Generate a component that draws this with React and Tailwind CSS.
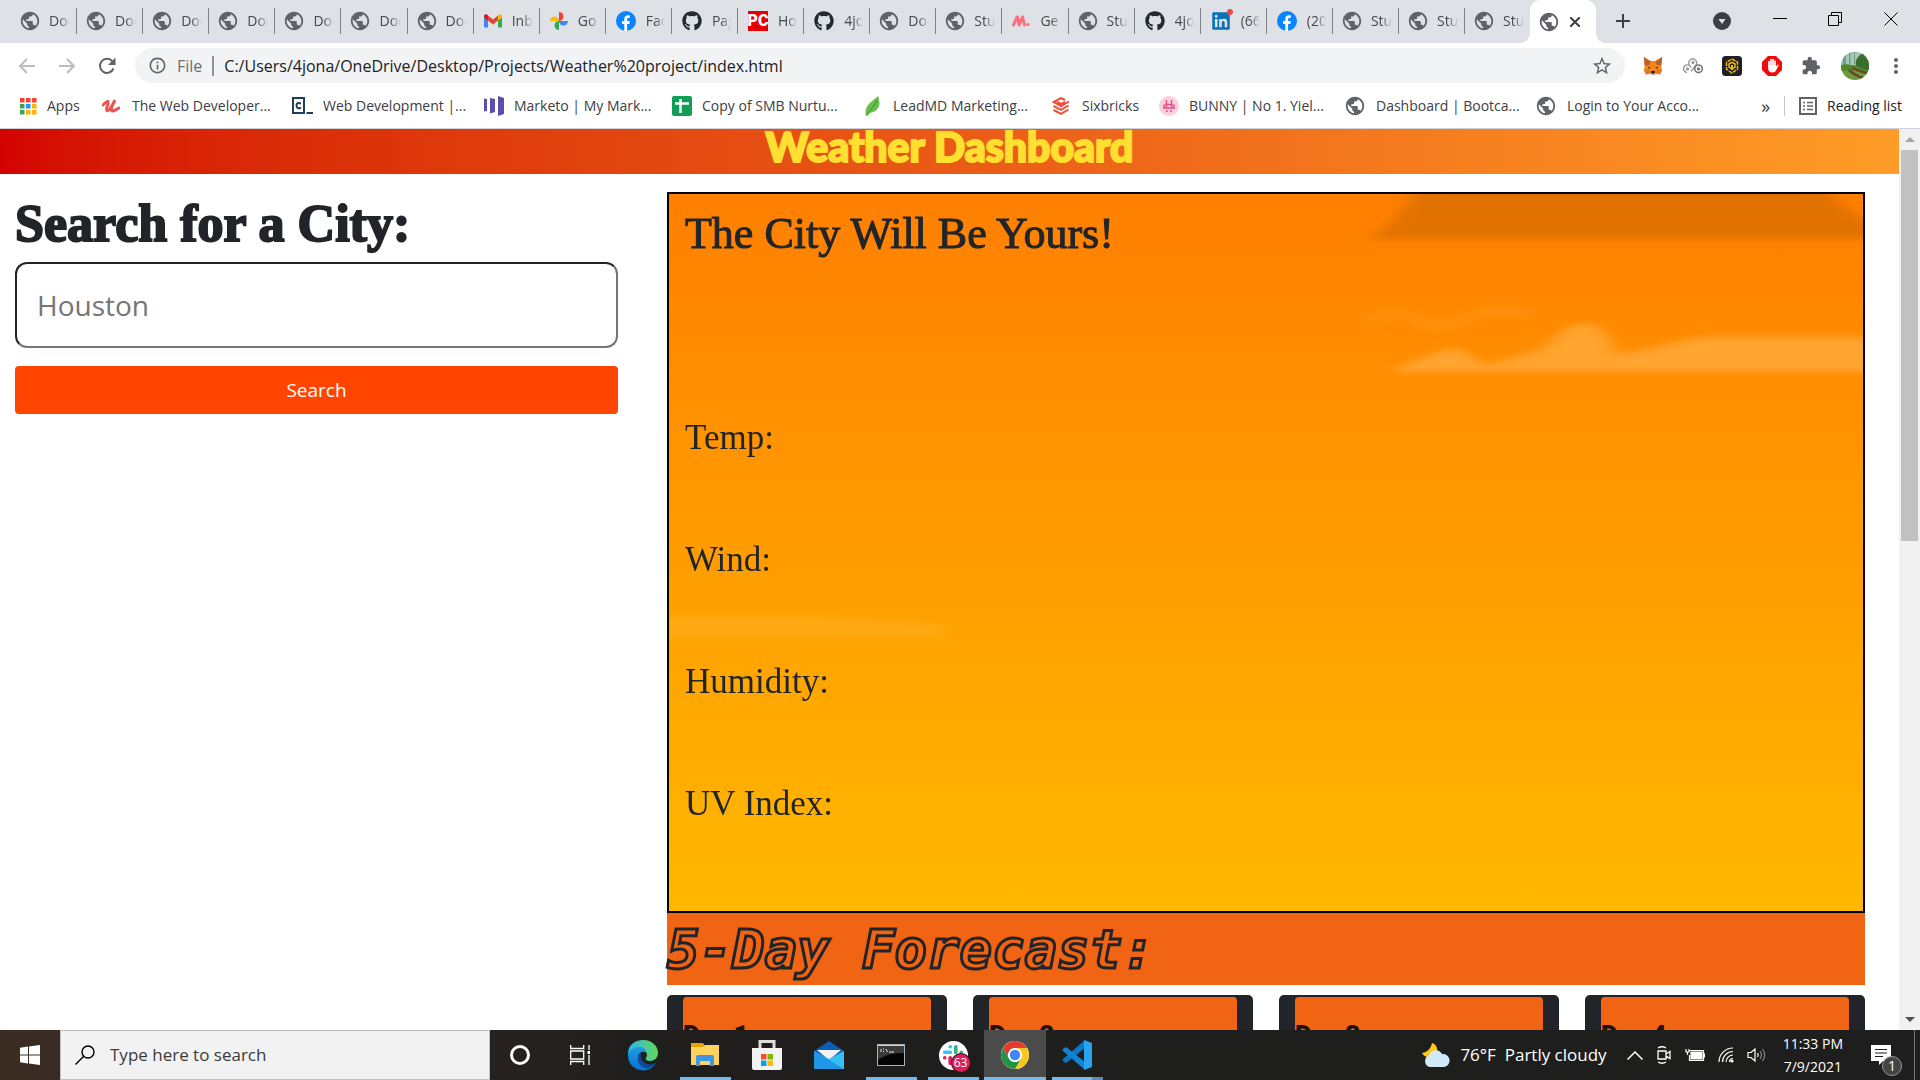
import React from "react";
import { FaGithub, FaLinkedin } from "react-icons/fa";
import { MdPublic, MdExtension, MdOutlineStarBorder, MdMoreVert, MdInfoOutline } from "react-icons/md";

function Globe() {
  return <MdPublic className="-mx-0.5 size-[22px] shrink-0 text-[#5f6368]" />;
}

function Gmail() {
  return (
    <svg viewBox="0 0 18 18" className="size-[18px] shrink-0">
      <path d="M0 4v10.500c0 .6.500 1 1 1h3V7z" fill="#4285f4" />
      <path d="M14 7v8.500h3c.6 0 1-.4 1-1V4z" fill="#34a853" />
      <path d="M4 3.500v5l5 4 5-4v-5L9 7.500z" fill="#ea4335" />
      <path d="M0 4.200C0 2.500 2 1.800 3.200 2.800L4 3.500v5l-4-3z" fill="#c5221f" />
      <path d="M18 4.200c0-1.700-2-2.400-3.200-1.400l-.8.700v5l4-3z" fill="#fbbc04" />
    </svg>
  );
}

function Photos() {
  return (
    <svg viewBox="0 0 18 18" className="size-[18px] shrink-0">
      <path d="M9 0a4.500 4.500 0 0 1 0 9z" fill="#ea4335" />
      <path d="M18 9a4.500 4.500 0 0 1-9 0z" fill="#4285f4" />
      <path d="M9 18a4.500 4.500 0 0 1 0-9z" fill="#34a853" />
      <path d="M0 9a4.500 4.500 0 0 1 9 0z" fill="#fbbc04" />
    </svg>
  );
}

function Facebook() {
  return (
    <svg viewBox="0 0 20 20" className="size-5 shrink-0">
      <circle cx="10" cy="10" r="10" fill="#0a84ff" />
      <path d="M8.300 20v-7H6v-3h2.300V8c0-2.600 1.400-3.800 3.600-3.800.9 0 1.700.1 1.900.2v2.500h-1.400c-1.100 0-1.300.6-1.300 1.400V10h2.600l-.4 3h-2.200v7z" fill="#fff" />
    </svg>
  );
}

function PcMag() {
  return (
    <span className="flex size-5 shrink-0 items-center justify-center bg-[#e80000] font-['Roboto'] text-base leading-5 font-black text-white">
      PC
    </span>
  );
}

function Github() {
  return <FaGithub className="size-5 shrink-0 text-[#24292e]" />;
}

function MonMark() {
  return (
    <svg viewBox="0 0 18 18" className="size-[18px] shrink-0">
      <path d="M1.500 13 5 5M7 13l3.500-8M7 13 5.500 5M12.500 13l-2-8" stroke="#ff6d78" strokeWidth="3" strokeLinecap="round" />
      <circle cx="16" cy="12.500" r="1.600" fill="#ff6d78" />
    </svg>
  );
}

function Linkedin() {
  return (
    <span className="relative size-5 shrink-0">
      <FaLinkedin className="size-5 text-[#0a72b5]" />
      <span className="absolute -top-0.5 -right-0.5 size-1.5 rounded-full bg-[#f0483e]" />
    </span>
  );
}

const tabs = [
  [Globe, "Doc"], [Globe, "Doc"], [Globe, "Doc"], [Globe, "Doc"], [Globe, "Doc"], [Globe, "Doc"], [Globe, "Doc"],
  [Gmail, "Inb"], [Photos, "Go"], [Facebook, "Fac"], [Github, "Pag"], [PcMag, "Ho"], [Github, "4jo"],
  [Globe, "Doc"], [Globe, "Stu"], [MonMark, "Ge"], [Globe, "Stu"], [Github, "4jo"], [Linkedin, "(66"],
  [Facebook, "(20"], [Globe, "Stu"], [Globe, "Stu"], [Globe, "Stu"],
];

function TabStrip() {
  return (
    <div className="flex h-[43px] shrink-0 bg-[#dee1e6]">
      <div className="flex min-w-0 flex-1 items-center pb-0.5 pl-[11px]">
        {tabs.map(([Icon, label], i) => (
          <button
            key={i}
            className={`flex h-[26px] min-w-0 flex-1 items-center gap-2.5 pl-2.5 ${i < 22 ? "border-r border-[#808387]" : ""}`}
          >
            <Icon />
            <span className="mr-1.5 min-w-0 flex-1 overflow-hidden text-left text-sm whitespace-nowrap text-[#45494d] [mask-image:linear-gradient(to_right,black_50%,transparent)]">
              {label}
            </span>
          </button>
        ))}
      </div>
      <div className="relative flex h-full w-[66px] items-center justify-center gap-3 rounded-t-[10px] bg-white pr-1.5">
        <span className="absolute bottom-0 -left-2.5 size-2.5 bg-[radial-gradient(circle_at_0_0,#dee1e6_10px,white_10px)]" />
        <span className="absolute -right-2.5 bottom-0 size-2.5 bg-[radial-gradient(circle_at_100%_0,#dee1e6_10px,white_10px)]" />
        <Globe />
        <button aria-label="Close tab">
          <svg viewBox="0 0 10 10" className="size-2.5 stroke-[#3c4043] stroke-2">
            <path d="m0 0 10 10M10 0 0 10" />
          </svg>
        </button>
      </div>
      <div className="flex w-[324px] items-center justify-between pr-[22px] pb-0.5 pl-5">
        <button aria-label="New tab">
          <svg viewBox="0 0 14 14" className="size-3.5 stroke-[#3c4043] stroke-2">
            <path d="M7 0v14M0 7h14" />
          </svg>
        </button>
        <div className="flex w-[185px] items-center justify-between">
          <button aria-label="Search tabs">
            <svg viewBox="0 0 18 18" className="size-[18px]">
              <circle cx="9" cy="9" r="9" fill="#3c4043" />
              <path d="M5.500 7h7L9 12z" fill="#dee1e6" />
            </svg>
          </button>
          <button aria-label="Minimize" className="mb-1">
            <svg viewBox="0 0 14 14" className="size-3.5 stroke-black" fill="none">
              <path d="M0 6.500h14" />
            </svg>
          </button>
          <button aria-label="Restore" className="mb-1">
            <svg viewBox="0 0 14 14" className="size-3.5 stroke-black" fill="none">
              <path d="M.5 3.500h10v10H.5zM3.500 3V.5h10v10H11" />
            </svg>
          </button>
          <button aria-label="Close window" className="mb-1">
            <svg viewBox="0 0 14 14" className="size-3.5 stroke-black" fill="none">
              <path d="m.5.5 13 13M13.500.5l-13 13" />
            </svg>
          </button>
        </div>
      </div>
    </div>
  );
}

function MetaMask() {
  return (
    <svg viewBox="0 0 20 20" className="size-5">
      <path d="M.8 1 8 5h4l7.200-4-.9 9 .7 4-2 4.500-4-1L11.500 19h-3L7 17.500l-4 1L1 14l.7-4z" fill="#f6851b" />
      <path d="M.8 1 8 6 6 9 1.700 9.500zM19.200 1 12 6l2 3 4.300.5z" fill="#b8612b" />
      <path d="m1 14 5-1 1 4.500-4 1zM19 14l-5-1-1 4.500 4 1z" fill="#e27625" />
      <path d="m5 10.500 3 1.500-2.500.500zM15 10.500 12 12l2.500.500z" fill="#233447" />
      <path d="m8 16 .5-1h3l.5 1-.5 1.500h-3z" fill="#161616" />
      <path d="M7.500 17.500h5l-1 1.500h-3z" fill="#c0ad9e" />
    </svg>
  );
}

function Rings() {
  return (
    <svg viewBox="0 0 20 20" className="size-5" fill="none" stroke="#999" strokeWidth="1.300">
      <path d="M4 16.500A3.800 3.800 0 1 1 8 11.500" />
      <path d="M6.500 9A3.900 3.900 0 1 1 13 9l-2 2.500-3 4" />
      <circle cx="15.500" cy="12.800" r="3.800" stroke="#777" strokeWidth="1.600" />
      <circle cx="15.500" cy="12.800" r="1" stroke="#666" />
      <circle cx="10" cy="6.500" r="1" />
      <circle cx="4.500" cy="13" r="1" />
    </svg>
  );
}

function Bsc() {
  return (
    <svg viewBox="0 0 20 20" className="size-5">
      <rect width="20" height="20" rx="3.500" fill="#1e2026" />
      <g fill="none" stroke="#f0b90b" strokeWidth="1.500">
        <path d="m10 3 5.500 3.200v7L10 17l-5.500-3.800v-7z" strokeDasharray="4 1" />
        <path d="m7 8 3-1.700L13 8v3l-3 2-3-2z" />
      </g>
      <path d="M9 9h2v5H9z" fill="#f0b90b" />
    </svg>
  );
}

function AdBlock() {
  return (
    <svg viewBox="0 0 20 20" className="size-5">
      <path d="M6 0h8l6 6v8l-6 6H6l-6-6V6z" fill="#ed0b0b" />
      <path d="M7 10V5.500M9 9V3.500M11 9V3.500M13 9.500V5" stroke="#fff" strokeWidth="1.700" strokeLinecap="round" />
      <path d="M6.200 9h7.700v1.500l1.600-1.800c.8-.5 1.300.2 1 .8L14 14.500c-.6 1.300-1.500 2-3.500 2-2.800 0-4.300-1.500-4.300-4z" fill="#fff" />
    </svg>
  );
}

function Avatar() {
  return (
    <svg viewBox="0 0 28 28" className="size-7 rounded-full">
      <rect width="28" height="28" fill="#6d9a3c" />
      <rect width="28" height="13" fill="#a9c9b8" />
      <path d="M2 0h3v13H2zM8 0h1.500v12H8zM13 0h1v12h-1z" fill="#6f9a85" />
      <path d="M18 4c4-4 8-3 10 0v15l-13-5c-1-4 0-7 3-10z" fill="#3b6e2a" />
      <path d="M0 13c7-2 12 0 16 2l12 4v3l-12-4L0 19z" fill="#4d8a2c" />
      <path d="M11 16c5 2 9 4 15 5M8 18c4 4 8 6 14 8" stroke="#6b4a2c" strokeWidth="2.500" fill="none" />
    </svg>
  );
}

function AddressBar() {
  return (
    <div className="flex h-[45px] shrink-0 items-center bg-white pr-4 pl-[18px]">
      <div className="flex w-[117px] items-center gap-[22px]">
        <button aria-label="Back">
          <svg viewBox="0 0 18 18" className="size-[18px] stroke-[#babcbe] stroke-2" fill="none">
            <path d="M17 9H2M9 2 2 9l7 7" />
          </svg>
        </button>
        <button aria-label="Forward">
          <svg viewBox="0 0 18 18" className="size-[18px] stroke-[#babcbe] stroke-2" fill="none">
            <path d="M1 9h15M9 2l7 7-7 7" />
          </svg>
        </button>
        <button aria-label="Reload">
          <svg viewBox="0 0 18 18" className="size-[18px]" fill="none">
            <path d="M15.500 11.500A7 7 0 1 1 14.500 4.500L16 6" stroke="#5f6368" strokeWidth="2" />
            <path d="M17.500.5V8H10z" fill="#5f6368" />
          </svg>
        </button>
      </div>
      <div className="flex h-[35px] min-w-0 flex-1 items-center rounded-full bg-[#f1f3f4] pr-3 pl-[13px]">
        <MdInfoOutline className="size-[19px] text-[#5f6368]" />
        <span className="ml-2.5 text-base text-[#6b6f73]">File</span>
        <span className="mx-2.5 h-5 w-0.5 bg-[#909396]" />
        <input
          aria-label="Address"
          className="min-w-0 flex-1 bg-transparent text-base text-[#202124] outline-none"
          defaultValue="C:/Users/4jona/OneDrive/Desktop/Projects/Weather%20project/index.html"
        />
        <button aria-label="Bookmark this page">
          <MdOutlineStarBorder className="size-[22px] text-[#5f6368]" />
        </button>
      </div>
      <div className="ml-[18px] flex w-[261px] items-center justify-between">
        <button aria-label="MetaMask"><MetaMask /></button>
        <button aria-label="Rings"><Rings /></button>
        <button aria-label="Wallet"><Bsc /></button>
        <button aria-label="AdBlock"><AdBlock /></button>
        <button aria-label="Extensions"><MdExtension className="size-5 text-[#5f6368]" /></button>
        <button aria-label="Profile"><Avatar /></button>
        <button aria-label="Menu" className="-mx-1"><MdMoreVert className="size-6 text-[#5f6368]" /></button>
      </div>
    </div>
  );
}

function Apps() {
  const colors = ["#f44336", "#f44336", "#f44336", "#34a853", "#2196f3", "#fbb105", "#34a853", "#fbb105", "#fbb105"];
  return (
    <svg viewBox="0 0 17 17" className="size-[17px]">
      {colors.map((c, i) => (
        <rect key={i} x={(i % 3) * 6} y={Math.floor(i / 3) * 6} width="4.500" height="4.500" fill={c} />
      ))}
    </svg>
  );
}

function Udemy() {
  return (
    <svg viewBox="0 0 18 18" className="size-[18px]" fill="none" stroke="#eb5252" strokeWidth="3">
      <path d="M1 8c2-2 4-4 5-3.500C7.500 6 3 12 5 13.500c2.500 1.500 6-7 8-10.500-2 4-5 10-3 11 1.500.5 4-1.500 7-3" strokeLinecap="round" />
    </svg>
  );
}

function Codecademy() {
  return (
    <svg viewBox="0 0 21 18" className="h-[18px] w-[21px]" fill="none" stroke="#204056" strokeWidth="2">
      <path d="M1 1h11v15H1zM14.500 16H21" />
      <path d="M9 6.500C6 5 4.500 6.500 4.500 8.500S6 12 9 10.800" />
    </svg>
  );
}

function Marketo() {
  return (
    <svg viewBox="0 0 20 20" className="size-5" fill="#5c4db1">
      <path d="M0 2.500 3 3v12l-3 .5zM6 2l5 1v13l-5 1.500zM14 0l6 2v16l-6 2z" />
    </svg>
  );
}

function Sheet() {
  return (
    <svg viewBox="0 0 20 20" className="size-5">
      <rect width="20" height="20" rx="2" fill="#0f9d58" />
      <path d="M8.500 3v14M3 7.500h14" stroke="#fff" strokeWidth="2.500" />
    </svg>
  );
}

function Leaf() {
  return (
    <svg viewBox="0 0 16 20" className="h-5 w-4">
      <path d="M13 0c3 8 2 15-8 17l-2.500 3H1C-1 10 5 7 13 0z" fill="#6abf4b" />
      <path d="M12 4C10 10 6 13 2 18" stroke="#3c8a30" fill="none" />
    </svg>
  );
}

function Sixbricks() {
  return (
    <svg viewBox="0 0 18 18" className="size-[18px]" fill="none" stroke="#f04e36" strokeWidth="2">
      <path d="M17 4.500 9 9 1.500 5 9 1l4 2M16.500 8.500 9 12.800 1.500 9M16.500 12.500 9 16.800 1.500 13M5 5l4 2 4-2" />
    </svg>
  );
}

function Bunny() {
  return (
    <svg viewBox="0 0 20 20" className="size-5">
      <circle cx="10" cy="10" r="10" fill="#fbd0da" />
      <path d="M7.500 4v8M12.500 4v8M5 12V9.500c0-1.500 10-1.500 10 0V12M4 12h12" stroke="#e0508a" strokeWidth="1.500" fill="none" />
      <circle cx="8" cy="15" r="1" fill="#e0508a" />
      <circle cx="12" cy="15" r="1" fill="#e0508a" />
    </svg>
  );
}

const bookmarks = [
  [Apps, "Apps", "w-[82px]", "gap-2.5"],
  [Udemy, "The Web Developer...", "w-[190px]", "gap-3"],
  [Codecademy, "Web Development |...", "w-[192px]", "gap-2.5"],
  [Marketo, "Marketo | My Mark...", "w-[188px]", "gap-2.5"],
  [Sheet, "Copy of SMB Nurtu...", "w-[193px]", "gap-2.5"],
  [Leaf, "LeadMD Marketing...", "w-[187px]", "gap-3"],
  [Sixbricks, "Sixbricks", "w-[107px]", "gap-3"],
  [Bunny, "BUNNY | No 1. Yiel...", "w-[187px]", "gap-2.5"],
  [Globe, "Dashboard | Bootca...", "w-[191px]", "gap-3"],
  [Globe, "Login to Your Acco...", "w-[190px]", "gap-3"],
];

function BookmarksBar() {
  return (
    <nav className="flex h-[41px] shrink-0 items-center border-b border-[#cfd2d9] bg-white pr-[18px] pb-1 pl-5 text-sm text-[#3c4043]">
      {bookmarks.map(([Icon, label, width, gap]) => (
        <a key={label} href="#" className={`flex items-center whitespace-nowrap ${width} ${gap}`}>
          <Icon />
          {label}
        </a>
      ))}
      <button className="ml-auto text-lg leading-5" aria-label="More bookmarks">»</button>
      <button className="ml-3.5 flex items-center gap-2.5 border-l border-[#c4c7cb] pl-3.5 text-[#202124]">
        <svg viewBox="0 0 18 18" className="size-[18px]" fill="none" stroke="#5f6368" strokeWidth="2">
          <path d="M1 1h16v16H1z" />
          <path d="M4 5.500h2M8 5.500h6M4 9h2M8 9h6M4 12.500h2M8 12.500h6" strokeWidth="1.500" />
        </svg>
        Reading list
      </button>
    </nav>
  );
}

function Sky() {
  return (
    <svg viewBox="0 0 1194 717" preserveAspectRatio="none" className="absolute inset-0 size-full" aria-hidden="true">
      <defs>
        <filter id="soft" x="-10%" y="-50%" width="120%" height="200%">
          <feGaussianBlur stdDeviation="8 3" />
        </filter>
      </defs>
      <g filter="url(#soft)">
        <path d="M752-10h404q15 25 48 38v17H700q18-12 30-26z" fill="#e27200" />
        <path d="M722 178q24-14 62-24 18 4 30 17 34-8 60-16 22-26 42-26t32 32q50-10 80-18h200v35z" fill="#ffa633" opacity=".9" />
        <path d="M700 130q20-20 45-5t60-4q30-8 60 0" stroke="#ff9a20" strokeWidth="12" fill="none" opacity=".35" />
        <path d="M-10 422h150l135 8v14H-10z" fill="#ffb01f" opacity=".5" />
      </g>
    </svg>
  );
}

function Scrollbar() {
  return (
    <div className="flex w-[21px] shrink-0 flex-col items-center bg-[#f1f1f1]">
      <svg viewBox="0 0 10 5" className="my-2 h-[5px] w-2.5">
        <path d="M5 0l5 5H0z" fill="#a3a3a3" />
      </svg>
      <div className="h-[391px] w-[17px] bg-[#c1c1c1]" />
      <svg viewBox="0 0 10 5" className="mt-auto mb-2 h-[5px] w-2.5">
        <path d="M0 0h10L5 5z" fill="#505050" />
      </svg>
    </div>
  );
}

function Page() {
  return (
    <div className="flex min-h-0 flex-1 bg-white text-[#212529]">
      <div className="min-w-0 flex-1 overflow-hidden">
        <header className="flex h-[45px] justify-center bg-linear-to-r from-[#d30202] via-[#ea5a16] to-[#ff9c26]">
          <h1 className="font-['Lato'] text-[41px] leading-[36px] font-black whitespace-nowrap text-[#ffdf2f] [-webkit-text-stroke:2px_#ffdf2f]">Weather Dashboard</h1>
        </header>
        <div className="flex">
          <form className="w-1/3 px-[15px] pt-[18px]" onSubmit={(e) => e.preventDefault()}>
            <label
              htmlFor="city"
              className="block font-['Liberation_Serif'] text-[52px] leading-[64px] font-bold whitespace-nowrap [-webkit-text-stroke:2px_#212529]"
            >
              Search for a City:
            </label>
            <input
              id="city"
              type="text"
              placeholder="Houston"
              className="mt-1.5 block h-[86px] w-full rounded-xl border-2 border-t-[#212529] border-r-[#767676] border-b-[#767676] border-l-[#212529] px-5 text-[28px] outline-none placeholder:text-[#757575]"
            />
            <button className="mt-[18px] block h-12 w-full rounded bg-[#ff4500] text-[19px] text-white">Search</button>
          </form>
          <main className="w-2/3 px-[34px] pt-[18px]">
            <section className="relative h-[721px] border-2 border-black bg-linear-to-b from-[#ff7f00] to-[#ffb800] px-4 pt-3.5 font-['Liberation_Serif']">
              <Sky />
              <div className="relative">
                <h2 className="text-[44px] leading-[52px] [-webkit-text-stroke:1px_#212529]">The City Will Be Yours!</h2>
                <div className="mt-[153px] flex flex-col gap-[72px] text-[35px] leading-[50px]">
                  <p>Temp:</p>
                  <p>Wind:</p>
                  <p>Humidity:</p>
                  <p>UV Index:</p>
                </div>
              </div>
            </section>
            <h2 className="h-[72px] bg-[#f06414] font-['DejaVu_Sans_Mono'] text-[54px] leading-[74px] font-bold whitespace-nowrap text-transparent italic [-webkit-text-stroke:3px_#212529]">
              5-Day Forecast:
            </h2>
            <div className="mt-2.5 grid grid-cols-4 gap-[26px]">
              {[1, 2, 3, 4].map((n) => (
                <article key={n} className="h-[320px] rounded-[5px] bg-[#212529] px-4 pt-0.5">
                  <div className="h-full rounded bg-[#f06414] pt-[22px]">
                    <h3 className="font-['Roboto'] text-[26px] leading-8 font-black text-[#1d1208]">Day {n}</h3>
                  </div>
                </article>
              ))}
            </div>
          </main>
        </div>
      </div>
      <Scrollbar />
    </div>
  );
}

function Edge() {
  return (
    <svg viewBox="0 0 32 32" className="size-8">
      <defs>
        <linearGradient id="edgeTop" x1="0" x2="1">
          <stop offset="0" stopColor="#2fb6ee" />
          <stop offset="1" stopColor="#5fd85a" />
        </linearGradient>
        <linearGradient id="edgeSide" x1="0" y1="0" x2="0" y2="1">
          <stop offset="0" stopColor="#1c9de5" />
          <stop offset="1" stopColor="#0c6fd0" />
        </linearGradient>
      </defs>
      <path d="M1 15C1 6 8 1 16 1c9 0 15 6 15 13 0 5-4 8-8 8-3 0-5-1-4-3 2-3 1-8-5-8C8 11 3 13 1 18z" fill="url(#edgeTop)" />
      <path d="M1 16c1-5 6-8 11-8 4 0 7 2 7 5-8-2-10 6-6 11 4 5 11 5 16 0-3 5-8 7.500-13 7.500C7 31 1 25 1 16z" fill="url(#edgeSide)" />
      <path d="M12 15c-3 6 0 12 6 14 4 1 8-1 11-5-6 3-13 1-15-5-.4-1.500 0-3 0-4z" fill="#0b4a94" />
    </svg>
  );
}

function Explorer() {
  return (
    <svg viewBox="0 0 28 24" className="h-6 w-7">
      <path d="M0 0h12l2 3v6H0z" fill="#e2a200" />
      <path d="M0 4h12l2-2h14v20H0z" fill="#ffd35e" />
      <path d="M5 23V14q0-2 2-2h14q2 0 2 2v9h-4v-5H9v5z" fill="#3e97e2" />
    </svg>
  );
}

function Store() {
  return (
    <svg viewBox="0 0 30 30" className="size-[30px]">
      <path d="M8 9V1.500h14V9" fill="none" stroke="#ddd" strokeWidth="3" />
      <path d="M0 8h30v20q0 2-2 2H2q-2 0-2-2z" fill="#f3f3f3" />
      <path d="M9 14h5.500v5.500H9z" fill="#f25022" />
      <path d="M15.500 14H21v5.500h-5.500z" fill="#7fba00" />
      <path d="M9 20.500h5.500V26H9z" fill="#00a4ef" />
      <path d="M15.500 20.500H21V26h-5.500z" fill="#ffb900" />
    </svg>
  );
}

function Mail() {
  return (
    <svg viewBox="0 0 30 28" className="h-7 w-[30px]">
      <path d="M0 10 15 0l15 10v8H0z" fill="#0c5eb5" />
      <path d="M3 9h24L15 19z" fill="#f2f2f2" />
      <path d="M0 10l15 8L30 10v18H0z" fill="#38c0f5" />
      <path d="M0 10 30 28H0z" fill="#1f97e6" />
    </svg>
  );
}

function Terminal() {
  return (
    <svg viewBox="0 0 28 22" className="h-[22px] w-7">
      <rect x=".5" y=".5" width="27" height="21" fill="#050505" stroke="#a8b0b8" />
      <path d="M1 1h26v8C18 9 8 10 1 16z" fill="#3a3a3a" />
      <path d="M1 1.500h26" stroke="#cfd6dd" />
      <path d="M4 5v3M6 5h1M6 7.500h1M9 5l1.500 3M12 8h5" stroke="#e6e6e6" />
    </svg>
  );
}

function Slack() {
  return (
    <span className="relative flex size-[29px] items-center justify-center rounded-full bg-white">
      <svg viewBox="0 0 20 20" className="size-[22px]" fill="none" strokeWidth="3.400" strokeLinecap="round">
        <path d="M2.500 7.500h5M7.500 2.500h.01" stroke="#36c5f0" />
        <path d="M12.500 2.500v5M17.500 7.500h.01" stroke="#2eb67d" />
        <path d="M17.500 12.500h-5M12.500 17.500h.01" stroke="#ecb22e" />
        <path d="M7.500 17.500v-5M2.500 12.500h.01" stroke="#e01e5a" />
      </svg>
      <span className="absolute -right-0.5 -bottom-0.5 flex h-[18px] w-[18px] items-center justify-center rounded-full bg-[#e01e5a] text-xs leading-3 text-white ring-1 ring-[#3a1020]">63</span>
    </span>
  );
}

function Chrome() {
  return (
    <svg viewBox="0 0 28 28" className="size-7">
      <circle cx="14" cy="14" r="14" fill="#fff" />
      <path d="M1.900 7A14 14 0 0 1 26.100 7H14a7 7 0 0 0-6.100 10.500z" fill="#e33b2e" />
      <path d="M26.100 7A14 14 0 0 1 14 28l6.100-10.500A7 7 0 0 0 14 7z" fill="#fbc71d" />
      <path d="M14 28A14 14 0 0 1 1.900 7l6 10.500A7 7 0 0 0 20.100 17.500z" fill="#229342" />
      <circle cx="14" cy="14" r="6.600" fill="#fff" />
      <circle cx="14" cy="14" r="5.200" fill="#4285f4" />
    </svg>
  );
}

function VsCode() {
  return (
    <svg viewBox="0 0 30 30" className="size-[30px]">
      <path d="M23 0v8L4 23l-3-2q-1-1 0-2z" fill="#0a78c4" />
      <path d="M23 30v-8L4 7 1 9q-1 1 0 2z" fill="#1184d4" />
      <path d="M22 0l8 3v24l-8 3z" fill="#28a3f0" />
    </svg>
  );
}

const apps = [
  ["Edge", Edge, false],
  ["File Explorer", Explorer, true],
  ["Microsoft Store", Store, false],
  ["Mail", Mail, false],
  ["Command Prompt", Terminal, true],
  ["Slack", Slack, true],
  ["Chrome", Chrome, true],
  ["Visual Studio Code", VsCode, true],
];

const underline = {
  Chrome: "w-full",
  "Visual Studio Code": "w-[51px] border-r-[11px] border-[#5b8db5]",
};

function Taskbar() {
  return (
    <footer className="flex h-[50px] shrink-0 items-center bg-[#1e1e1e] bg-linear-to-r from-[#3b2d24] via-[#1f1e1d] via-35% to-[#1e1e1e] text-white">
      <button aria-label="Start" className="flex h-full w-[60px] items-center justify-center">
        <svg viewBox="0 0 20 20" className="size-5" fill="#fff">
          <path d="M0 2.800 8 1.600v7.900H0zM9 1.500 20 0v9.500H9zM0 10.500h8v7.900l-8-1.200zM9 10.500h11V20L9 18.500z" />
        </svg>
      </button>
      <label className="flex h-full w-[430px] items-center gap-[15px] border border-[#c0c0c0] bg-[#f2f2f2] pl-3.5 text-[#2b2b2b]">
        <svg viewBox="0 0 20 20" className="size-5 stroke-black" fill="none" strokeWidth="1.400">
          <circle cx="13" cy="7" r="6" />
          <path d="m8.500 11.500-8 8" />
        </svg>
        <input aria-label="Type here to search" placeholder="Type here to search" className="min-w-0 flex-1 text-[17px] outline-none placeholder:text-[#3b3b3b]" />
      </label>
      <button aria-label="Cortana" className="flex w-[60px] justify-center">
        <span className="size-5 rounded-full border-[3px] border-white" />
      </button>
      <button aria-label="Task view" className="flex w-[60px] justify-center">
        <svg viewBox="0 0 20 20" className="size-5 stroke-white" fill="none" strokeWidth="1.300">
          <path d="M.7 0v3.500h13V0M.7 20v-3.500h13V20M.7 6h13v8H.7zM19 0v5M19 10v10" />
          <path d="M17.500 6h3v3h-3z" fill="#fff" stroke="none" />
        </svg>
      </button>
      <div className="ml-0.5 flex h-full">
        {apps.map(([label, Icon, open]) => (
          <button
            key={label}
            aria-label={label}
            className={`relative flex h-full w-[62px] items-center justify-center ${label === "Chrome" ? "bg-[#4b4b4b]" : ""}`}
          >
            <Icon />
            {open && <span className={`absolute bottom-0 h-[3px] bg-[#76b9ed] ${underline[label] || "w-[51px]"}`} />}
          </button>
        ))}
      </div>
      <div className="ml-auto flex h-full items-center pr-[5px]">
        <svg viewBox="0 0 28 26" className="h-[26px] w-7">
          <path d="M10 1c-1 5-4 9-10 10 3 6 12 6 15-1 1-4-1-8-5-9z" fill="#fdc614" />
          <path d="M8 25a6 6 0 0 1-1-11.500 7 7 0 0 1 13-1.500 6.500 6.500 0 0 1 2 13z" fill="#cfe8fa" />
        </svg>
        <span className="ml-2.5 text-[17px] whitespace-nowrap">76°F&nbsp; Partly cloudy</span>
        <div className="ml-5 flex w-[140px] items-center justify-between">
          <svg viewBox="0 0 16 9" className="h-[9px] w-4 stroke-white" fill="none" strokeWidth="1.500"><path d="m.5 8.500 7.500-7.500 7.500 7.500" /></svg>
          <svg viewBox="0 0 16 18" className="h-[18px] w-4 stroke-white" fill="none" strokeWidth="1.300"><path d="M2 5h8v8H2zM10 8l4-2.500v7L10 10M2 2q4-2.500 8 0M2 16q4 2.500 8 0" /></svg>
          <svg viewBox="0 0 20 14" className="h-3.5 w-5 stroke-white" fill="none" strokeWidth="1.200"><path d="M4.500 2.500h14v10h-14V7" /><path d="M6 4h11v7H6z" fill="#fff" /><path d="M19.500 5.500v4M1 1v3h3V1M2.500 4v3" /></svg>
          <svg viewBox="0 0 16 16" className="size-4 stroke-white" fill="none" strokeWidth="1.200"><path d="M1 15A14 14 0 0 1 15 1M4.500 15A10.500 10.500 0 0 1 15 4.500M8 15a7 7 0 0 1 7-7M11.500 15a3.500 3.500 0 0 1 3.500-3.500" /><circle cx="14" cy="14" r="1" fill="#fff" /></svg>
          <svg viewBox="0 0 20 16" className="h-4 w-5 stroke-white" fill="none" strokeWidth="1.200"><path d="M1 5.500h3L8 2v12l-4-3.500H1zM10.500 6q1.500 2 0 4" /><path d="M13 4q3 4 0 8M15.500 2q4.500 6 0 12" stroke="#888" /></svg>
        </div>
        <div className="ml-4 text-center text-sm leading-[23px] whitespace-nowrap">
          <p>11:33 PM</p>
          <p>7/9/2021</p>
        </div>
        <button aria-label="Notifications" className="relative ml-7 flex h-full w-[31px] items-center">
          <svg viewBox="0 0 20 20" className="size-5"><path d="M0 0h20v16h-8l-4 4v-4H0z" fill="#fff" /><path d="M4 4.500h12M4 8h12M4 11.500h8" stroke="#1e1e1e" strokeWidth="1.200" /></svg>
          <span className="absolute right-0 bottom-1 flex size-5 items-center justify-center rounded-full border border-[#999] bg-[#444] text-sm leading-4">1</span>
        </button>
        <span className="ml-3 h-full w-px bg-[#777]" />
      </div>
    </footer>
  );
}

export default function App() {
  return (
    <div className="flex h-screen flex-col overflow-hidden bg-white font-['Open_Sans','Noto_Sans',sans-serif]">
      <TabStrip />
      <AddressBar />
      <BookmarksBar />
      <Page />
      <Taskbar />
    </div>
  );
}
